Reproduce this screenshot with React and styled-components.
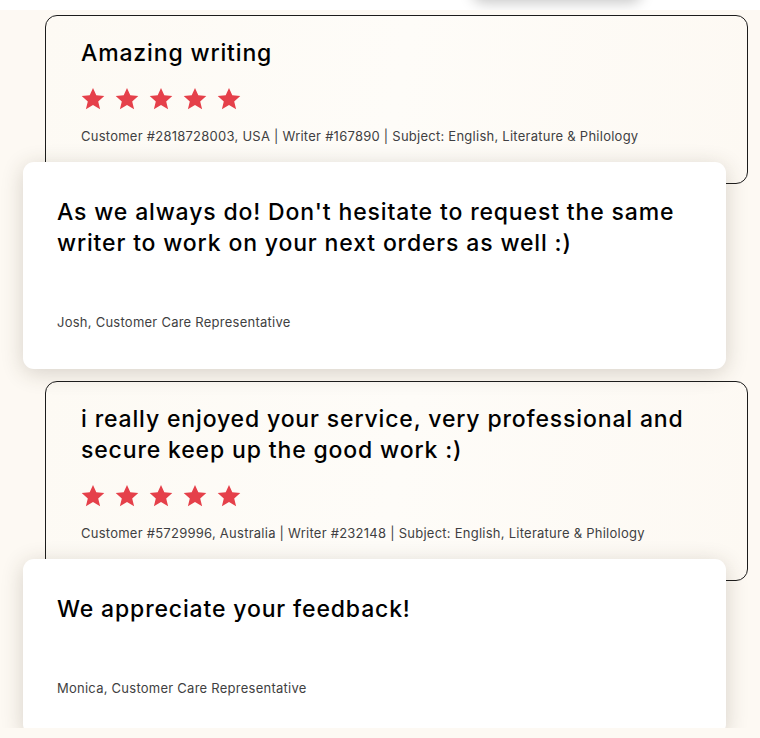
import React from 'react'
import styled, { createGlobalStyle } from 'styled-components'

const GlobalStyle = createGlobalStyle`
    html, body {
        margin: 0;
        padding: 0;
        background: #fdf9f3;
    }
    body {
        font-family: 'Inter', 'Noto Sans', sans-serif;
        color: #111;
    }
`;

const Page = styled.div`
    width: 760px;
    height: 738px;
    display: flex;
    flex-direction: column;
    background: #fdf9f3;
`;

const TopBand = styled.div`
    height: 10px;
    background: #fff;
    overflow: hidden;
    display: flex;
    flex-shrink: 0;
`;

const FloatingPill = styled.div`
    width: 170px;
    height: 40px;
    margin: -40px 0 0 472px;
    border-radius: 12px;
    background: #fff;
    box-shadow: 0 3px 14px rgba(0, 0, 0, 0.22);
`;

const Feed = styled.div`
    height: 718px;
    flex-shrink: 0;
    overflow: hidden;
    display: flex;
    flex-direction: column;
    padding: 5px 12px 0 23px;
    box-sizing: border-box;
`;

const ReviewCard = styled.article`
    width: 703px;
    flex-shrink: 0;
    margin: ${p => (p.$first ? '0' : '12px')} 0 0 22px;
    box-sizing: border-box;
    border: 1px solid #1c1c1c;
    border-radius: 12px;
    background: linear-gradient(100deg, #fdfaf4 0%, #fefcf8 50%, #fdf9f3 100%);
    padding: 22px 35px 38px 35px;
    display: flex;
    flex-direction: column;
`;

const ReplyCard = styled.article`
    width: 703px;
    margin-top: -22px;
    box-sizing: border-box;
    border-radius: 11px;
    background: #fff;
    box-shadow: 0 4px 22px rgba(60, 50, 30, 0.2);
    padding: 35px 34px 38px 34px;
    display: flex;
    flex-direction: column;
    position: relative;
    flex-shrink: 0;
`;

const Title = styled.h3`
    margin: 0;
    font-size: 23px;
    line-height: 31px;
    font-weight: 500;
    color: #000;
    letter-spacing: 0.85px;
`;

const Stars = styled.div`
    display: flex;
    gap: 10px;
    margin-top: 18px;
`;

const Meta = styled.p`
    margin: 16px 0 0;
    font-size: 13px;
    line-height: 18px;
    color: #3f3f42;
    letter-spacing: 0.25px;
`;

const Author = styled.p`
    margin: 54px 0 0;
    font-size: 13px;
    line-height: 18px;
    color: #3f3f42;
    letter-spacing: 0.25px;
`;

function Star() {
    return (
        <svg width="24" height="24" viewBox="0 0 24 24">
            <path
                d="M12 1l3.3 7.3 8 .8-6.1 5.3 1.9 7.9L12 18.1l-7.1 4.2 1.9-7.9-6.1-5.3 8-.8z"
                fill="#e5404a"
            />
        </svg>
    )
}

const feed = [
    {
        review: 'Amazing writing',
        meta: 'Customer #2818728003, USA | Writer #167890 | Subject: English, Literature & Philology',
        reply: "As we always do! Don't hesitate to request the same writer to work on your next orders as well :)",
        author: 'Josh, Customer Care Representative',
    },
    {
        review: 'i really enjoyed your service, very professional and secure keep up the good work :)',
        meta: 'Customer #5729996, Australia | Writer #232148 | Subject: English, Literature & Philology',
        reply: 'We appreciate your feedback!',
        author: 'Monica, Customer Care Representative',
    },
];

export default function App() {
    return (
        <Page>
            <GlobalStyle />
            <TopBand>
                <FloatingPill />
            </TopBand>
            <Feed>
                {feed.map((item, i) => (
                    <React.Fragment key={i}>
                        <ReviewCard $first={i === 0}>
                            <Title>{item.review}</Title>
                            <Stars>
                                {[0, 1, 2, 3, 4].map(s => <Star key={s} />)}
                            </Stars>
                            <Meta>{item.meta}</Meta>
                        </ReviewCard>
                        <ReplyCard>
                            <Title>{item.reply}</Title>
                            <Author>{item.author}</Author>
                        </ReplyCard>
                    </React.Fragment>
                ))}
            </Feed>
        </Page>
    )
}
